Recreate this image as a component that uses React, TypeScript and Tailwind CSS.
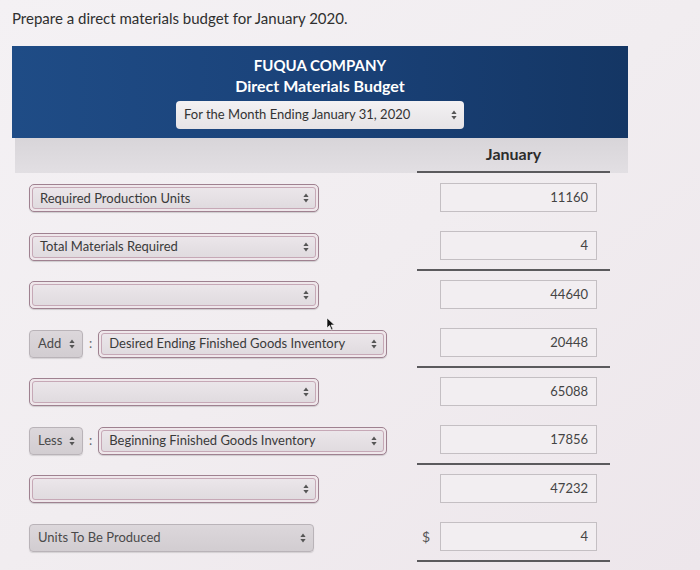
import React from 'react';

const font = { fontFamily: 'Lato, "Open Sans", sans-serif' };

function Arrows({ className = '' }: { className?: string }) {
  return (
    <svg width="6" height="10" viewBox="0 0 6 10" className={className}>
      <path d="M3 0.5 L5.6 4 H0.4 Z" fill="#555" />
      <path d="M3 9.5 L5.6 6 H0.4 Z" fill="#555" />
    </svg>
  );
}

function PinkSelect({ label = '', width = 'w-[290px]' }: { label?: string; width?: string }) {
  return (
    <div className={`${width} h-[28px] rounded-[5px] border border-[#9f8190] p-[2px] bg-[#efe7eb] shadow-[0_1px_1px_rgba(0,0,0,0.15)]`}>
      <div className="h-full rounded-[3px] border border-[#c6a8b6] bg-gradient-to-b from-[#ebe6ea] to-[#e0dbdf] flex items-center justify-between pl-[7px] pr-[6px]">
        <span className="text-[13px] text-[#3a3a3a]">{label}</span>
        <Arrows />
      </div>
    </div>
  );
}

function GraySelect({ label, width }: { label: string; width: string }) {
  return (
    <div className={`${width} h-[28px] rounded-[4px] border border-[#b9b3b8] bg-gradient-to-b from-[#dcd7db] to-[#d2cdd1] flex items-center justify-between pl-[8px] pr-[7px] shadow-[0_1px_1px_rgba(0,0,0,0.12)]`}>
      <span className="text-[13px] text-[#4a4a4a]">{label}</span>
      <Arrows />
    </div>
  );
}

function OpSelect({ op, label }: { op: string; label: string }) {
  return (
    <div className="flex items-center">
      <GraySelect label={op} width="w-[54px]" />
      <span className="mx-[6px] text-[13px] text-[#666]">:</span>
      <PinkSelect label={label} width="w-[289px]" />
    </div>
  );
}

type Row = {
  left: React.ReactNode;
  value: string;
  line?: boolean;
  dollar?: boolean;
};

const rows: Row[] = [
  { left: <PinkSelect label="Required Production Units" />, value: '11160' },
  { left: <PinkSelect label="Total Materials Required" />, value: '4', line: true },
  { left: <PinkSelect />, value: '44640' },
  { left: <OpSelect op="Add" label="Desired Ending Finished Goods Inventory" />, value: '20448', line: true },
  { left: <PinkSelect />, value: '65088' },
  { left: <OpSelect op="Less" label="Beginning Finished Goods Inventory" />, value: '17856', line: true },
  { left: <PinkSelect />, value: '47232' },
  { left: <GraySelect label="Units To Be Produced" width="w-[285px]" />, value: '4', line: true, dollar: true },
];

export default function App() {
  return (
    <div className="relative w-[700px] h-[570px] overflow-hidden bg-gradient-to-br from-[#f4f1f4] via-[#f1edf0] to-[#ede6eb]" style={font}>
      <div className="pl-[12px] pt-[7px]">
        <p className="text-[15px] text-[#2f2f2f]">Prepare a direct materials budget for January 2020.</p>

        <div className="mt-[16px] w-[616px]">
          <div className="h-[92px] bg-gradient-to-r from-[#1f4c86] via-[#1a4279] to-[#143664] flex flex-col items-center pt-[9px]">
            <div className="text-[15px] font-bold text-white leading-[20px]">FUQUA COMPANY</div>
            <div className="text-[16px] font-bold text-white leading-[20px] mt-[1px]">Direct Materials Budget</div>
            <div className="mt-[5px] w-[288px] h-[28px] rounded-[4px] bg-gradient-to-b from-[#f3f1f3] to-[#e6e3e6] flex items-center justify-between pl-[8px] pr-[7px]">
              <span className="text-[13px] text-[#333]">For the Month Ending January 31, 2020</span>
              <Arrows />
            </div>
          </div>
          <div className="ml-[3px] h-[35px] bg-gradient-to-b from-[#d8d5d9] to-[#e2dfe3] flex">
            <div className="w-[402px]" />
            <div className="w-[193px] flex items-center justify-center border-b-2 border-[#5b5a5d]">
              <span className="text-[16px] font-bold text-[#2c2c2c]">January</span>
            </div>
          </div>

          <div className="flex flex-col pt-[1px]">
            {rows.map((r, i) => (
              <div key={i} className="h-[48.5px] flex">
                <div className="w-[405px] pl-[17px] pt-[1px] flex items-center">{r.left}</div>
                <div className={`w-[193px] flex items-center ${r.line ? 'border-b-2 border-[#5b5a5d]' : ''}`}>
                  <div className="w-[23px] text-[14px] text-[#555] pl-[5px]">{r.dollar ? '$' : ''}</div>
                  <div className="w-[157px] h-[29px] border border-[#c4bfc3] bg-[#f2eef1] flex items-center justify-end pr-[8px]">
                    <span className="text-[13px] text-[#444]">{r.value}</span>
                  </div>
                </div>
              </div>
            ))}
          </div>
        </div>
      </div>

      <svg className="absolute left-[326px] top-[317px]" width="10" height="14" viewBox="0 0 10 14">
        <path d="M1 1 L1 11 L3.5 8.5 L5.5 13 L7 12.3 L5 8 L8.5 8 Z" fill="#111" stroke="#fff" strokeWidth="0.6" />
      </svg>
    </div>
  );
}
